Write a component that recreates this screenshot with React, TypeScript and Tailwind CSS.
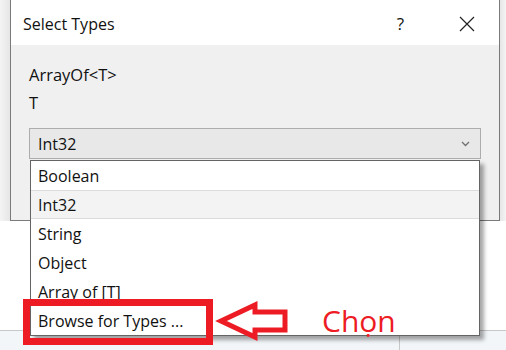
const types = ["Boolean", "Int32", "String", "Object", "Array of [T]", "Browse for Types ..."];

export default function App() {
  return (
    <div
      className="relative w-[506px] h-[350px] overflow-hidden bg-white text-[#111]"
      style={{ fontFamily: '"Open Sans", "Noto Sans", sans-serif' }}
    >
      {/* window area */}
      <div className="flex h-[221px]">
        <div className="w-[10px] bg-gradient-to-r from-[#f4f4f4] to-[#e6e6e6]" />
        <div className="w-[490px] flex flex-col border-x border-b border-[#7a7a7a]">
          {/* title bar */}
          <div className="h-[45px] bg-white flex items-center pl-[12px] pr-[24px] pt-[3px]">
            <span className="text-[16px]">Select Types</span>
            <span className="ml-auto text-[17px]">?</span>
            <button className="ml-[55px] w-[16px] h-[16px] flex items-center justify-center">
              <svg width="16" height="16" viewBox="0 0 16 16" stroke="#222" strokeWidth="1.2">
                <path d="M1 1 L15 15 M15 1 L1 15" />
              </svg>
            </button>
          </div>

          {/* body */}
          <div className="flex-1 bg-[#f0f0f0] pt-[16px] pl-[18px] pr-[18px]">
            <div className="text-[16.5px] leading-[28px]">ArrayOf&lt;T&gt;</div>
            <div className="text-[16.5px] leading-[28px]">T</div>
            <div className="relative mt-[11px] h-[31px] w-[452px] border border-[#adadad] bg-[#e8e8e8] flex items-center pl-[8px] pr-[10px]">
              <span className="text-[16px]">Int32</span>
              <svg className="ml-auto" width="9" height="6" viewBox="0 0 9 6" fill="none" stroke="#707070" strokeWidth="1.3">
                <path d="M1 1 L4.5 4.5 L8 1" />
              </svg>

              {/* open list */}
              <ul className="absolute left-0 top-[31px] z-10 w-[450px] border border-[#646464] bg-white shadow-[4px_4px_4px_rgba(0,0,0,0.35)]">
                {types.map((t) => (
                  <li
                    key={t}
                    className={
                      t === "Int32"
                        ? "h-[29px] flex items-center pl-[7px] text-[16px] bg-[#f3f3f3] border-y border-[#dcdcdc]"
                        : "h-[29px] flex items-center pl-[7px] text-[16px]"
                    }
                  >
                    {t}
                  </li>
                ))}
              </ul>
            </div>
          </div>
        </div>
        <div className="flex-1 bg-gradient-to-r from-[#e6e6e6] to-[#f4f4f4]" />
      </div>

      {/* content behind the dialog */}
      <div className="mt-[109px] h-[1px] bg-[#c8c8c8]" />
      <div className="flex h-[20px] bg-[#f3f6f9]">
        <div className="w-[400px] border-r border-[#c8c8c8]" />
      </div>

      {/* annotation */}
      <div className="absolute left-[23px] top-[299px] w-[190px] h-[46px] border-[7px] border-[#ed1c24] z-20" />
      <svg className="absolute left-[214px] top-[300px] z-20" width="80" height="42" viewBox="0 0 80 42" fill="white" stroke="#ed1c24" strokeWidth="5" strokeLinejoin="miter">
        <path d="M7 21 L41 5 L41 12 L71 12 L71 30 L41 30 L41 37 Z" />
      </svg>
      <span className="absolute left-[322px] top-[301px] z-20 text-[30px] leading-[40px] text-[#ed1c24]">Chọn</span>
    </div>
  );
}
